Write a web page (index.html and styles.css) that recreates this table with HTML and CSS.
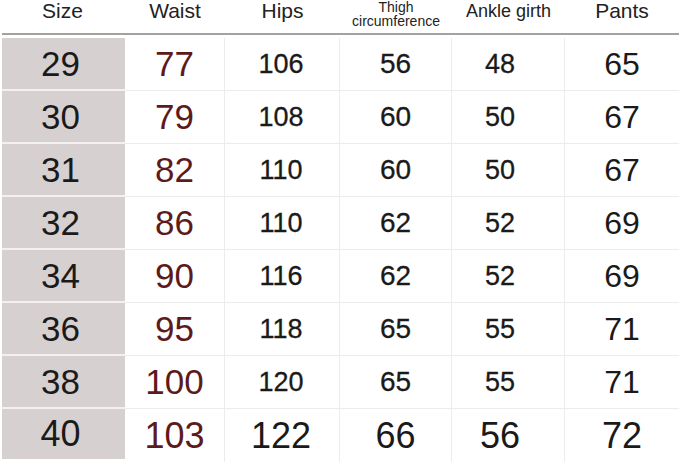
FILE: index.html
```html
<!DOCTYPE html>
<html>
<head>
<meta charset="utf-8">
<link rel="stylesheet" href="styles.css">
</head>
<body>
<div class="chart">
  <div class="head">
    <div class="h">Size</div>
    <div class="h">Waist</div>
    <div class="h">Hips</div>
    <div class="h thigh"><span>Thigh</span><span>circumference</span></div>
    <div class="h ankle">Ankle girth</div>
    <div class="h">Pants</div>
  </div>
  <div class="rule"></div>
  <div class="body">
    <div class="c size">29</div><div class="c waist">77</div><div class="c hips">106</div><div class="c thi">56</div><div class="c ank">48</div><div class="c pants">65</div>
    <div class="c size">30</div><div class="c waist">79</div><div class="c hips">108</div><div class="c thi">60</div><div class="c ank">50</div><div class="c pants">67</div>
    <div class="c size">31</div><div class="c waist">82</div><div class="c hips">110</div><div class="c thi">60</div><div class="c ank">50</div><div class="c pants">67</div>
    <div class="c size">32</div><div class="c waist">86</div><div class="c hips">110</div><div class="c thi">62</div><div class="c ank">52</div><div class="c pants">69</div>
    <div class="c size">34</div><div class="c waist">90</div><div class="c hips">116</div><div class="c thi">62</div><div class="c ank">52</div><div class="c pants">69</div>
    <div class="c size">36</div><div class="c waist">95</div><div class="c hips">118</div><div class="c thi">65</div><div class="c ank">55</div><div class="c pants">71</div>
    <div class="c size">38</div><div class="c waist">100</div><div class="c hips">120</div><div class="c thi">65</div><div class="c ank">55</div><div class="c pants">71</div>
    <div class="c size last">40</div><div class="c waist last">103</div><div class="c hips last">122</div><div class="c thi last">66</div><div class="c ank last">56</div><div class="c pants last">72</div>
  </div>
</div>
</body>
</html>
```
FILE: styles.css
```css
html, body {
  margin: 0;
  padding: 0;
  background: #ffffff;
}
.chart {
  width: 679px;
  height: 463px;
  overflow: hidden;
  font-family: "Liberation Sans", Arial, sans-serif;
  color: #1a1a1a;
}
.head {
  display: grid;
  grid-template-columns: 125px 100px 115px 112px 113px 114px;
  height: 33px;
}
.h {
  font-size: 21px;
  line-height: 21px;
  color: #222;
  text-align: center;
  white-space: nowrap;
}
.thigh {
  display: flex;
  flex-direction: column;
  align-items: center;
  font-size: 14px;
  line-height: 14px;
  padding-top: 0;
}
.ankle {
  font-size: 18px;
  padding-top: 1px;
}
.rule {
  margin-left: 2px;
  height: 2px;
  background: #a2a2a2;
}
.body {
  margin-top: 3px;
  margin-left: 2px;
  display: grid;
  grid-template-columns: 123px 100px 115px 112px 113px 114px;
  grid-template-rows: repeat(8, 53px);
}
.c {
  display: flex;
  align-items: center;
  justify-content: center;
  box-sizing: border-box;
  border-bottom: 1px solid #ececec;
  border-right: 1px solid #ececec;
  background: #ffffff;
}
.size {
  background: #d6d0d0;
  border-bottom: 2px solid #f3f0f0;
  border-right: none;
  font-size: 35px;
  padding-right: 6px;
}
.waist {
  font-size: 35px;
  color: #5c1a1c;
}
.hips {
  font-size: 27px;
  -webkit-text-stroke: 0.3px #1a1a1a;
  padding-right: 2px;
}
.thi {
  font-size: 28px;
  -webkit-text-stroke: 0.3px #1a1a1a;
}
.ank {
  font-size: 27px;
  -webkit-text-stroke: 0.3px #1a1a1a;
  padding-right: 16px;
}
.pants {
  font-size: 32px;
  border-right: none;
}
.c.last {
  border-bottom: none;
  font-size: 36px;
  -webkit-text-stroke: 0;
}
.size.last {
  margin-bottom: 3px;
}
```
